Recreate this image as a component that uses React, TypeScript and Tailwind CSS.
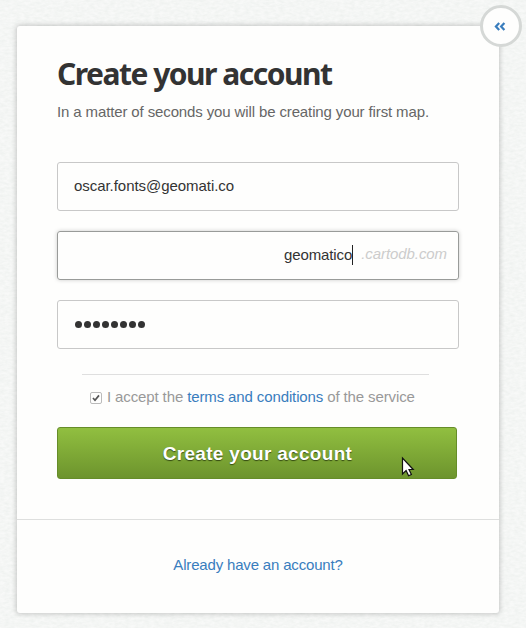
import React from "react";

function PaperTexture() {
  return (
    <svg className="absolute inset-0 h-full w-full" aria-hidden="true">
      <filter id="paper" x="0" y="0" width="100%" height="100%" colorInterpolationFilters="sRGB">
        <feTurbulence type="fractalNoise" baseFrequency="0.2 0.4" numOctaves="3" seed="8" />
        <feColorMatrix values="0 0 0 0 0.74  0 0 0 0 0.79  0 0 0 0 0.76  0.25 0 0 0 -0.06" />
      </filter>
      <rect width="100%" height="100%" filter="url(#paper)" />
    </svg>
  );
}

function CloseButton() {
  return (
    <button className="absolute -top-[21px] -right-[23px] flex size-[42px] items-center justify-center rounded-full border-[3px] border-[#d5d8d6] bg-[#fefefd]" aria-label="Close">
      <svg width="12" height="9" viewBox="0 0 12 9" fill="none" stroke="#397dbd" strokeWidth="2.2" className="mr-[2px]">
        <path d="M5.2 .9 1.9 4.5l3.3 3.6M10.4 .9 7.1 4.5l3.3 3.6" />
      </svg>
    </button>
  );
}

function Pointer() {
  return (
    <svg className="absolute top-[29px] left-[344px]" width="14" height="22" viewBox="0 0 14 22">
      <path d="M1.5 2v16l3.6-3.4 2.5 5.2 2.8-1.3-2.4-5h4.2z" fill="#fff" stroke="#111" strokeWidth="1.2" />
    </svg>
  );
}

export default function App() {
  return (
    <main className="relative h-[628px] w-full overflow-hidden bg-[#f8f9f8] px-[17px] pt-[26px] font-['Liberation_Sans',Arial,sans-serif] text-[15px] leading-[18px]">
      <PaperTexture />
      <section className="relative h-[587px] w-[482px] rounded-[3px] bg-[#fefefd] shadow-[0_0_5px_1px_rgba(0,0,0,0.2)]">
        <CloseButton />
        <div className="h-[494px] border-b border-[#dedfde] pt-[28px] pl-[40px]">
          <h1 className="h-[40px] font-['Noto_Sans',sans-serif] text-[30px] leading-[40px] font-bold tracking-[-1.5px] whitespace-nowrap text-[#333]">Create your account</h1>
          <p className="mt-[9px] tracking-[-0.125px] whitespace-nowrap text-[#666]">In a matter of seconds you will be creating your first map.</p>
          <div className="mt-[41px] flex w-[402px] flex-col gap-[20px] text-[#333]">
            <div className="flex h-[49px] items-center rounded-[3px] border border-[#c8c8c8] px-[16px] pb-[2px] tracking-[-0.05px]">
              <span>oscar.fonts@geomati.co</span>
            </div>
            <div className="flex h-[49px] items-center justify-end rounded-[3px] border border-[#999b99] pr-[11px] pb-px shadow-[0_0_4px_rgba(0,0,0,0.2)]">
              <span className="tracking-[-0.1px]">geomatico</span>
              <span className="h-[20px] w-px bg-[#222]" />
              <span className="relative -top-px ml-[8px] tracking-[-0.08px] text-[#ccc] italic">.cartodb.com</span>
            </div>
            <div className="flex h-[49px] items-center gap-[2px] rounded-[3px] border border-[#c8c8c8] px-[17px]">
              {Array.from({ length: 8 }, (_, i) => (
                <span key={i} className="size-[7px] rounded-full bg-[#333]" />
              ))}
            </div>
          </div>
          <div className="mt-[25px] ml-[25px] h-px w-[347px] bg-[#dfdfdf]" />
          <div className="mt-[13px] ml-[33px] flex h-[18px] items-center whitespace-nowrap text-[#999]">
            <span className="mt-px mr-[5px] flex size-[12px] items-center justify-center rounded-[2px] border border-[#bbb]">
              <svg width="8" height="8" viewBox="0 0 8 8" fill="none" stroke="#555" strokeWidth="1.7">
                <path d="m1 4 2 2.3L7 1.4" />
              </svg>
            </span>
            <span className="tracking-[-0.12px]">I accept the <a className="text-[#397dbd]">terms and conditions</a> of the service</span>
          </div>
          <div className="relative mt-[21px] w-[400px]">
            <button className="block h-[52px] w-full rounded-[3px] border border-[#668d29] bg-linear-to-b from-[#91bf40] to-[#6d942d] pl-px text-[19px] leading-[51px] font-bold tracking-[0.3px] text-white [text-shadow:0_1px_1px_#344a12]">
              Create your account
            </button>
            <Pointer />
          </div>
        </div>
        <div className="flex h-[93px] items-center justify-center pb-[3px]">
          <a className="tracking-[-0.17px] text-[#397dbd]">Already have an account?</a>
        </div>
      </section>
    </main>
  );
}
